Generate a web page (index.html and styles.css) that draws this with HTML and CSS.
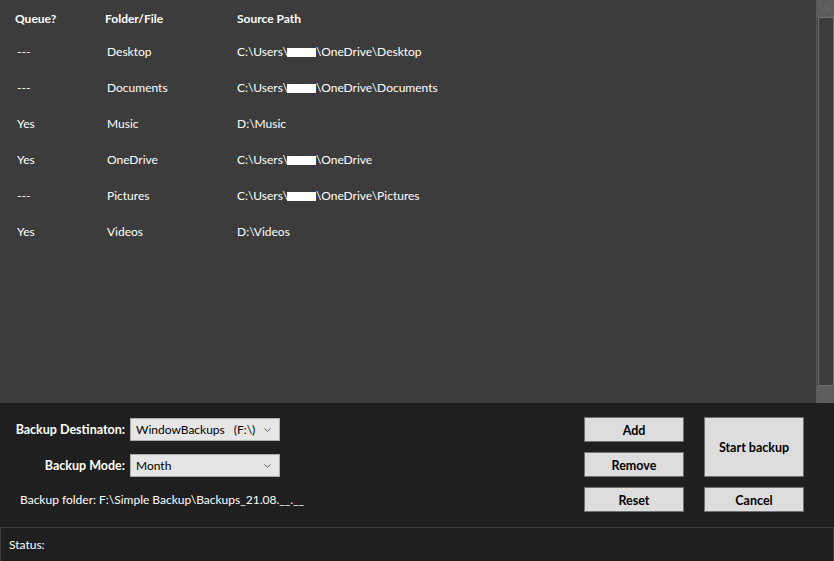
FILE: index.html
```html
<!DOCTYPE html>
<html>
<head>
<meta charset="utf-8">
<link rel="stylesheet" href="styles.css">
</head>
<body>
<div class="app">
  <div class="list-area">
    <div class="table">
      <div class="row head">
        <div class="c1">Queue?</div><div class="c2">Folder/File</div><div class="c3">Source Path</div>
      </div>
      <div class="row"><div class="c1 d">---</div><div class="c2 d">Desktop</div><div class="c3">C:\Users\<span class="redact"></span>\OneDrive\Desktop</div></div>
      <div class="row"><div class="c1 d">---</div><div class="c2 d">Documents</div><div class="c3">C:\Users\<span class="redact"></span>\OneDrive\Documents</div></div>
      <div class="row"><div class="c1 d">Yes</div><div class="c2 d">Music</div><div class="c3">D:\Music</div></div>
      <div class="row"><div class="c1 d">Yes</div><div class="c2 d">OneDrive</div><div class="c3">C:\Users\<span class="redact"></span>\OneDrive</div></div>
      <div class="row"><div class="c1 d">---</div><div class="c2 d">Pictures</div><div class="c3">C:\Users\<span class="redact"></span>\OneDrive\Pictures</div></div>
      <div class="row"><div class="c1 d">Yes</div><div class="c2 d">Videos</div><div class="c3">D:\Videos</div></div>
    </div>
    <div class="scrollbar">
      <div class="arrow"><svg width="9" height="5" viewBox="0 0 9 5"><path d="M0.5 4.5 L4.5 0.8 L8.5 4.5" fill="none" stroke="#6a6a6a" stroke-width="1"/></svg></div>
      <div class="thumb"></div>
      <div class="arrow"><svg width="9" height="5" viewBox="0 0 9 5"><path d="M0.5 0.5 L4.5 4.2 L8.5 0.5" fill="none" stroke="#6a6a6a" stroke-width="1"/></svg></div>
    </div>
  </div>
  <div class="controls">
    <div class="form">
      <div class="fields">
        <div class="label">Backup Destinaton:</div>
        <div class="select"><span class="val">WindowBackups<span class="gap"></span>(F:\)</span><svg class="chev" width="7" height="4" viewBox="0 0 7 4"><path d="M0.5 0.5 L3.5 3.3 L6.5 0.5" fill="none" stroke="#606060" stroke-width="1"/></svg></div>
        <div class="label">Backup Mode:</div>
        <div class="select"><span class="val">Month</span><svg class="chev" width="7" height="4" viewBox="0 0 7 4"><path d="M0.5 0.5 L3.5 3.3 L6.5 0.5" fill="none" stroke="#606060" stroke-width="1"/></svg></div>
      </div>
      <div class="folder">Backup folder: F:\Simple Backup\Backups_21.08.__.__</div>
    </div>
    <div class="buttons">
      <button class="btn add">Add</button>
      <button class="btn start">Start backup</button>
      <button class="btn remove">Remove</button>
      <button class="btn reset">Reset</button>
      <button class="btn cancel">Cancel</button>
    </div>
  </div>
  <div class="status">Status:</div>
</div>
</body>
</html>
```
FILE: styles.css
```css
* { box-sizing: border-box; }
html, body { margin: 0; padding: 0; }
body {
  width: 834px;
  height: 561px;
  overflow: hidden;
  background: #1f1f1f;
  font-family: "Lato", "Noto Sans", "Liberation Sans", sans-serif;
  font-size: 12px;
  color: #ffffff;
}
.app { display: flex; flex-direction: column; height: 561px; }

.list-area {
  height: 403px;
  background: #3c3c3c;
  display: flex;
}
.table { flex: 1; }
.row {
  display: grid;
  grid-template-columns: 90px 132px 1fr;
  padding-left: 15px;
  height: 36px;
  align-items: center;
  line-height: 16px;
  padding-top: 1px;
}
.row.head {
  height: 33px;
  align-items: start;
  padding-top: 11px;
  font-weight: bold;
}
.d { padding-left: 2px; }
.redact {
  display: inline-block;
  width: 29px;
  height: 9px;
  background: #ffffff;
  vertical-align: -1px;
  margin: 0 0 0 -1px;
}

.scrollbar {
  width: 18px;
  border-left: 1px solid #5a5a5a;
  display: flex;
  flex-direction: column;
}
.arrow {
  height: 17px;
  background: #5d5d5d;
  display: flex;
  align-items: center;
  justify-content: center;
}
.thumb {
  flex: 1;
  border: 1px solid #707070;
  margin-left: 1px;
  background: #3c3c3c;
}

.controls {
  height: 124px;
  display: flex;
  justify-content: space-between;
  padding: 14px 30px 0 15px;
}
.fields {
  display: grid;
  grid-template-columns: 110px 150px;
  column-gap: 5px;
  row-gap: 13px;
  margin-top: 1px;
}
.label {
  text-align: right;
  font-weight: bold;
  font-size: 12.5px;
  line-height: 23px;
  white-space: nowrap;
}
.select {
  height: 23px;
  background: #e6e6e6;
  border: 1px solid #acacac;
  color: #000;
  display: flex;
  align-items: center;
  justify-content: space-between;
  padding: 0 8px 0 5px;
  font-size: 12px;
}
.val { white-space: pre; display: flex; }
.gap { display: inline-block; width: 9px; }
.folder {
  margin-top: 15px;
  padding-left: 5px;
  line-height: 16px;
}

.buttons {
  display: grid;
  grid-template-columns: 100px 100px;
  grid-template-rows: 25px 25px 25px;
  column-gap: 20px;
  row-gap: 10px;
}
.btn {
  background: #dddddd;
  border: 1px solid #707070;
  color: #000;
  font-family: inherit;
  font-size: 12.5px;
  font-weight: bold;
  padding: 1px 0 0;
  margin: 0;
}
.add { grid-column: 1; grid-row: 1; }
.start { grid-column: 2; grid-row: 1 / span 2; }
.remove { grid-column: 1; grid-row: 2; }
.reset { grid-column: 1; grid-row: 3; }
.cancel { grid-column: 2; grid-row: 3; }

.status {
  height: 34px;
  border-top: 1px solid #3e3e3e;
  border-right: 1px solid #3e3e3e;
  border-left: 1px solid #3e3e3e;
  padding-left: 8px;
  line-height: 34px;
}
```
